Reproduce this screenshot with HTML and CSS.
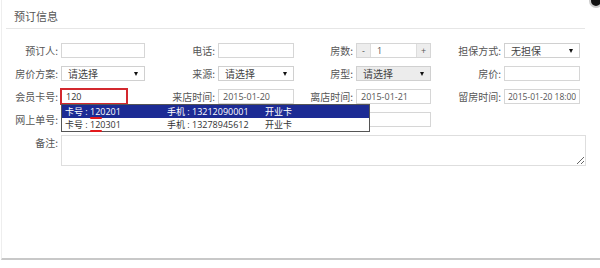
FILE: index.html
```html
<!DOCTYPE html>
<html lang="zh-CN">
<head>
<meta charset="UTF-8">
<title>预订信息</title>
<link rel="stylesheet" href="styles.css">
</head>
<body>

<div class="panel">
  <h2 class="title">预订信息</h2>

  <div class="form">
    <label class="lbl">预订人:</label>
    <div class="field"><input class="inp" type="text"></div>
    <label class="lbl">电话:</label>
    <div class="field"><input class="inp" type="text"></div>
    <label class="lbl">房数:</label>
    <div class="field spin">
      <span class="spin-btn">-</span>
      <span class="spin-val">1</span>
      <span class="spin-btn">+</span>
    </div>
    <label class="lbl">担保方式:</label>
    <div class="field"><div class="sel">无担保<i class="arrow"></i></div></div>

    <label class="lbl">房价方案:</label>
    <div class="field"><div class="sel">请选择<i class="arrow"></i></div></div>
    <label class="lbl">来源:</label>
    <div class="field"><div class="sel">请选择<i class="arrow"></i></div></div>
    <label class="lbl">房型:</label>
    <div class="field"><div class="sel sel-off">请选择<i class="arrow"></i></div></div>
    <label class="lbl">房价:</label>
    <div class="field"><input class="inp" type="text"></div>

    <label class="lbl">会员卡号:</label>
    <div class="field card-field">
      <input class="inp inp-focus" type="text" value="120">
      <ul class="suggest">
        <li class="on"><span class="c1">卡号 : 120201</span><span class="c2">手机 : 13212090001</span><span class="c3">开业卡</span></li>
        <li><span class="c1">卡号 : 120301</span><span class="c2">手机 : 13278945612</span><span class="c3">开业卡</span></li>
      </ul>
      <b class="mark mark-1"></b>
      <b class="mark mark-2"></b>
    </div>
    <label class="lbl">来店时间:</label>
    <div class="field"><input class="inp" type="text" value="2015-01-20"></div>
    <label class="lbl">离店时间:</label>
    <div class="field"><input class="inp" type="text" value="2015-01-21"></div>
    <label class="lbl">留房时间:</label>
    <div class="field"><input class="inp inp-long" type="text" value="2015-01-20 18:00"></div>

    <label class="lbl">网上单号:</label>
    <div class="field wide"><input class="inp" type="text"></div>

    <label class="lbl lbl-top">备注:</label>
    <div class="field memo"><textarea class="area"></textarea></div>
  </div>

  <div class="close"></div>
</div>

</body>
</html>
```

FILE: styles.css
```css
body {
  margin: 0;
  background: #fff;
  font-family: "Noto Sans CJK SC", "Open Sans", sans-serif;
  font-size: 10px;
  color: #555;
}
.panel {
  position: relative;
  height: 258px;
  margin-left: 1px;
  border-left: 1px solid #eee;
  border-bottom: 2px solid #c8c8c8;
  overflow: hidden;
}
.close {
  position: absolute;
  z-index: 5;
  right: -3px;
  top: -6px;
  width: 10px;
  height: 10px;
  border-radius: 50%;
  background: #111;
  border: 2px solid #ccc;
}
.title {
  margin: 0 15px 0 4px;
  padding: 9px 0 4px 8px;
  font-size: 11px;
  font-weight: normal;
  line-height: 15px;
  color: #555;
  border-bottom: 1px solid #e6e6e6;
}
.form {
  display: grid;
  grid-template-columns: 59px 84px 73px 76px 62px 75px 73px 76px;
  grid-auto-rows: 15px;
  row-gap: 8px;
  margin-top: 14px;
}
.lbl {
  text-align: right;
  padding-right: 3px;
  line-height: 15px;
  white-space: nowrap;
  color: #555;
}
.lbl-top {
  grid-column: 1;
  align-self: start;
}
.field {
  position: relative;
  display: flex;
}
.inp {
  width: 100%;
  height: 15px;
  box-sizing: border-box;
  margin: 0;
  padding: 0 4px;
  border: 1px solid #d6d6d6;
  font-family: "Open Sans", "Noto Sans CJK SC", sans-serif;
  font-size: 9px;
  color: #555;
  outline: none;
}
.inp-long {
  padding: 0 3px;
  font-size: 8.5px;
}
.inp-focus {
  width: 68px;
  height: 17px;
  margin: -1px 0 0 -1px;
  border: 2px solid #d3282e;
  padding-left: 4px;
  color: #333;
}
.sel {
  position: relative;
  width: 100%;
  height: 15px;
  box-sizing: border-box;
  border: 1px solid #d0d0d0;
  padding-left: 6px;
  line-height: 13px;
  font-size: 10px;
  color: #444;
  background: #fff;
}
.sel-off {
  background: #ececec;
}
.arrow {
  position: absolute;
  right: 6px;
  top: 5px;
  width: 0;
  height: 0;
  border-left: 2px solid transparent;
  border-right: 2px solid transparent;
  border-top: 4px solid #111;
}
.spin {
  height: 15px;
  border: 1px solid #d6d6d6;
  box-sizing: border-box;
  line-height: 13px;
}
.spin-btn {
  width: 13px;
  text-align: center;
  background: #ededed;
  color: #555;
  font-family: "Open Sans", sans-serif;
  font-size: 9px;
}
.spin-val {
  flex: 1;
  padding-left: 6px;
  border-left: 1px solid #ddd;
  border-right: 1px solid #ddd;
  font-family: "Open Sans", sans-serif;
  font-size: 9px;
}
.wide {
  grid-column: 2 / 7;
}
.memo {
  grid-column: 2 / 9;
  grid-row: span 2;
  height: 31px;
  margin-right: -6px;
}
.area {
  width: 100%;
  height: 31px;
  box-sizing: border-box;
  margin: 0;
  border: 1px solid #dedede;
  resize: vertical;
}
.card-field {
  z-index: 2;
}
.suggest {
  position: absolute;
  left: 0;
  top: 15px;
  width: 307px;
  margin: 0;
  padding: 0;
  list-style: none;
  border: 1px solid #555;
  background: #fff;
  font-family: "Open Sans", "Noto Sans CJK SC", sans-serif;
  font-size: 9px;
  color: #333;
}
.suggest li {
  display: flex;
  height: 13px;
  line-height: 13px;
  padding-left: 3px;
}
.suggest li.on {
  background: #1c2b94;
  color: #fff;
}
.c1 {
  width: 102px;
}
.c2 {
  width: 98px;
}
.mark {
  position: absolute;
  left: 29px;
  width: 12px;
  height: 2px;
  background: #e3191c;
  border-radius: 1px;
}
.mark-1 {
  top: 28px;
}
.mark-2 {
  top: 41px;
}
```
